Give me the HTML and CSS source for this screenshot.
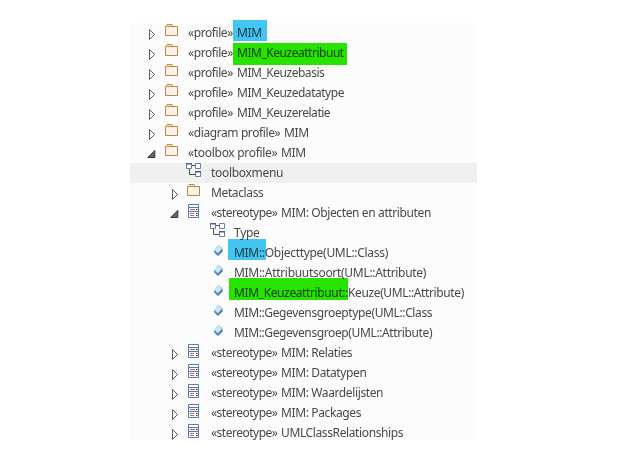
FILE: index.html
```html
<!DOCTYPE html>
<html lang="nl">
<head>
<meta charset="utf-8">
<title>MIM toolbox</title>
<link rel="stylesheet" href="styles.css">
</head>
<body>
<svg class="defs" width="0" height="0" aria-hidden="true">
  <defs>
    <linearGradient id="gem" x1="0" y1="0" x2="1" y2="1"><stop offset="0" stop-color="#8fc0e4"/><stop offset="1" stop-color="#345d92"/></linearGradient>
    <symbol id="closed" viewBox="0 0 9 20"><path d="M2.5 6.500v10l5-5z" fill="#fff" stroke="#5c5c5c"/></symbol>
    <symbol id="open" viewBox="0 0 9 20"><path d="M.8 14.5h7v-7z" fill="#666" stroke="#303030"/></symbol>
    <symbol id="folder" viewBox="0 0 16 20"><path d="M.5 3.5H2v-2h5l1 2h4.500v9H.5z" fill="#fff0e8" stroke="#b5884a"/><path d="M2.500 3.500h6" stroke="#b5884a"/><path d="M2.500 2.500h4" stroke="#fff0b0"/></symbol>
    <symbol id="links" viewBox="0 0 16 20"><path d="M5 2.500h5M3.500 5v6.500h6" fill="none" stroke="#505050"/><path d="M.5 .500h5v5h-5zM9.500 .500h5v5h-5zM9.500 8.500h5v5h-5z" fill="#fff" stroke="#727d96"/><path d="M0 .750h6M9 8.750h6" stroke="#43629d" stroke-width="1.500"/></symbol>
    <symbol id="sheet" viewBox="0 0 16 20"><path d="M1.500 1.500h10v13h-10z" fill="#fff" stroke="#5878b4"/><path d="M2 4.500h9M2 8.500h9" stroke="#5878b4"/><path d="M3 6.500h5M3 10.500h4M3 12.500h4" stroke="#a46e78"/><path d="M9 6.500h1.500M9 10.500h1.500M9 12.500h1.500" stroke="#333"/></symbol>
    <symbol id="diamond" viewBox="0 0 16 20"><path d="M4 7.500 8.500 2l4 3.500v3L8 13l-4-4z" fill="url(#gem)"/><path d="M4.500 7 8.500 2.500l3.500 3-4 5z" fill="#c9e7f5"/><path d="M4 7.500 8 10.500v2.500l-4-4z" fill="#5b8dbd"/></symbol>
  </defs>
</svg>
<main class="tree">
  <div class="row"><svg class="toggle"><use href="#closed"/></svg><svg class="icon"><use href="#folder"/></svg><span class="kind">«profile»</span><span class="name n1">MIM<i class="mark blue m1"></i></span></div>
  <div class="row"><svg class="toggle"><use href="#closed"/></svg><svg class="icon"><use href="#folder"/></svg><span class="kind">«profile»</span><span class="name n2">MIM_Keuzeattribuut<i class="mark green m2"></i></span></div>
  <div class="row"><svg class="toggle"><use href="#closed"/></svg><svg class="icon"><use href="#folder"/></svg><span class="kind">«profile»</span><span class="name n3">MIM_Keuzebasis</span></div>
  <div class="row"><svg class="toggle"><use href="#closed"/></svg><svg class="icon"><use href="#folder"/></svg><span class="kind">«profile»</span><span class="name n4">MIM_Keuzedatatype</span></div>
  <div class="row"><svg class="toggle"><use href="#closed"/></svg><svg class="icon"><use href="#folder"/></svg><span class="kind">«profile»</span><span class="name n5">MIM_Keuzerelatie</span></div>
  <div class="row"><svg class="toggle"><use href="#closed"/></svg><svg class="icon"><use href="#folder"/></svg><span class="kind diagram">«diagram profile»</span><span class="name">MIM</span></div>
  <div class="row"><svg class="toggle"><use href="#open"/></svg><svg class="icon"><use href="#folder"/></svg><span class="kind toolbox">«toolbox profile»</span><span class="name">MIM</span></div>
  <div class="row l2 selected"><svg class="toggle"></svg><svg class="icon"><use href="#links"/></svg><span class="name n8">toolboxmenu</span></div>
  <div class="row l2"><svg class="toggle"><use href="#closed"/></svg><svg class="icon"><use href="#folder"/></svg><span class="name n9">Metaclass</span></div>
  <div class="row l2"><svg class="toggle"><use href="#open"/></svg><svg class="icon"><use href="#sheet"/></svg><span class="kind stereo">«stereotype»</span><span class="name n10">MIM: Objecten en attributen</span></div>
  <div class="row l3"><svg class="toggle"></svg><svg class="icon"><use href="#links"/></svg><span class="name n11">Type</span></div>
  <div class="row l3"><svg class="toggle"></svg><svg class="icon"><use href="#diamond"/></svg><span class="name n12">MIM::Objecttype(UML::Class)<i class="mark blue m3"></i></span></div>
  <div class="row l3"><svg class="toggle"></svg><svg class="icon"><use href="#diamond"/></svg><span class="name n13">MIM::Attribuutsoort(UML::Attribute)</span></div>
  <div class="row l3"><svg class="toggle"></svg><svg class="icon"><use href="#diamond"/></svg><span class="name n14">MIM_Keuzeattribuut::Keuze(UML::Attribute)<i class="mark green m4"></i></span></div>
  <div class="row l3"><svg class="toggle"></svg><svg class="icon"><use href="#diamond"/></svg><span class="name n15">MIM::Gegevensgroeptype(UML::Class</span></div>
  <div class="row l3"><svg class="toggle"></svg><svg class="icon"><use href="#diamond"/></svg><span class="name n16">MIM::Gegevensgroep(UML::Attribute)</span></div>
  <div class="row l2"><svg class="toggle"><use href="#closed"/></svg><svg class="icon"><use href="#sheet"/></svg><span class="kind stereo">«stereotype»</span><span class="name n17">MIM: Relaties</span></div>
  <div class="row l2"><svg class="toggle"><use href="#closed"/></svg><svg class="icon"><use href="#sheet"/></svg><span class="kind stereo">«stereotype»</span><span class="name n18">MIM: Datatypen</span></div>
  <div class="row l2"><svg class="toggle"><use href="#closed"/></svg><svg class="icon"><use href="#sheet"/></svg><span class="kind stereo">«stereotype»</span><span class="name n19">MIM: Waardelijsten</span></div>
  <div class="row l2"><svg class="toggle"><use href="#closed"/></svg><svg class="icon"><use href="#sheet"/></svg><span class="kind stereo">«stereotype»</span><span class="name n20">MIM: Packages</span></div>
  <div class="row l2"><svg class="toggle"><use href="#closed"/></svg><svg class="icon"><use href="#sheet"/></svg><span class="kind stereo">«stereotype»</span><span class="name n21">UMLClassRelationships</span></div>
</main>
</body>
</html>
```

FILE: styles.css
```css
body { margin: 0; background: #fff; font: 12px/20px "Noto Sans", sans-serif; color: #484848; }
.defs { display: block; height: 0; }
.tree { width: 347px; height: 417px; margin: 23px 0 0 130px; background: #fcfcfc; }
.row { display: flex; height: 20px; padding-left: 17px; white-space: nowrap; }
.l2 { padding-left: 40px; }
.l3 { padding-left: 63px; }
.selected { background: #f0f0f0; }
.toggle { width: 9px; height: 20px; margin-right: 9px; flex: none; }
.icon { width: 16px; height: 20px; margin-right: 7px; flex: none; }
.l2 .icon, .l3 .icon { margin-left: -1px; margin-right: 8px; }
.selected .icon { margin-left: -2px; margin-right: 9px; }
.kind { width: 49px; flex: none; letter-spacing: -.42px; }
.diagram { width: 96px; letter-spacing: -.4px; }
.toolbox { width: 93px; letter-spacing: -.3px; }
.stereo { width: 70px; letter-spacing: -.5px; }
.name { position: relative; letter-spacing: -.38px; }
.n1, .n8, .n11 { letter-spacing: -.3px; }
.n2, .n3, .n4, .n5 { letter-spacing: -.47px; }
.n12, .n13 { letter-spacing: -.3px; }
.mark { position: absolute; mix-blend-mode: multiply; }
.blue { background: #43c8f4; }
.green { background: #28e600; }
.m1 { left: -4px; top: -3px; width: 34px; height: 21px; }
.m2 { left: -4px; top: 0; width: 114px; height: 22px; }
.m3 { left: -6px; top: -4px; width: 38px; height: 21px; }
.m4 { left: -5px; top: -5px; width: 119px; height: 22px; }
```
